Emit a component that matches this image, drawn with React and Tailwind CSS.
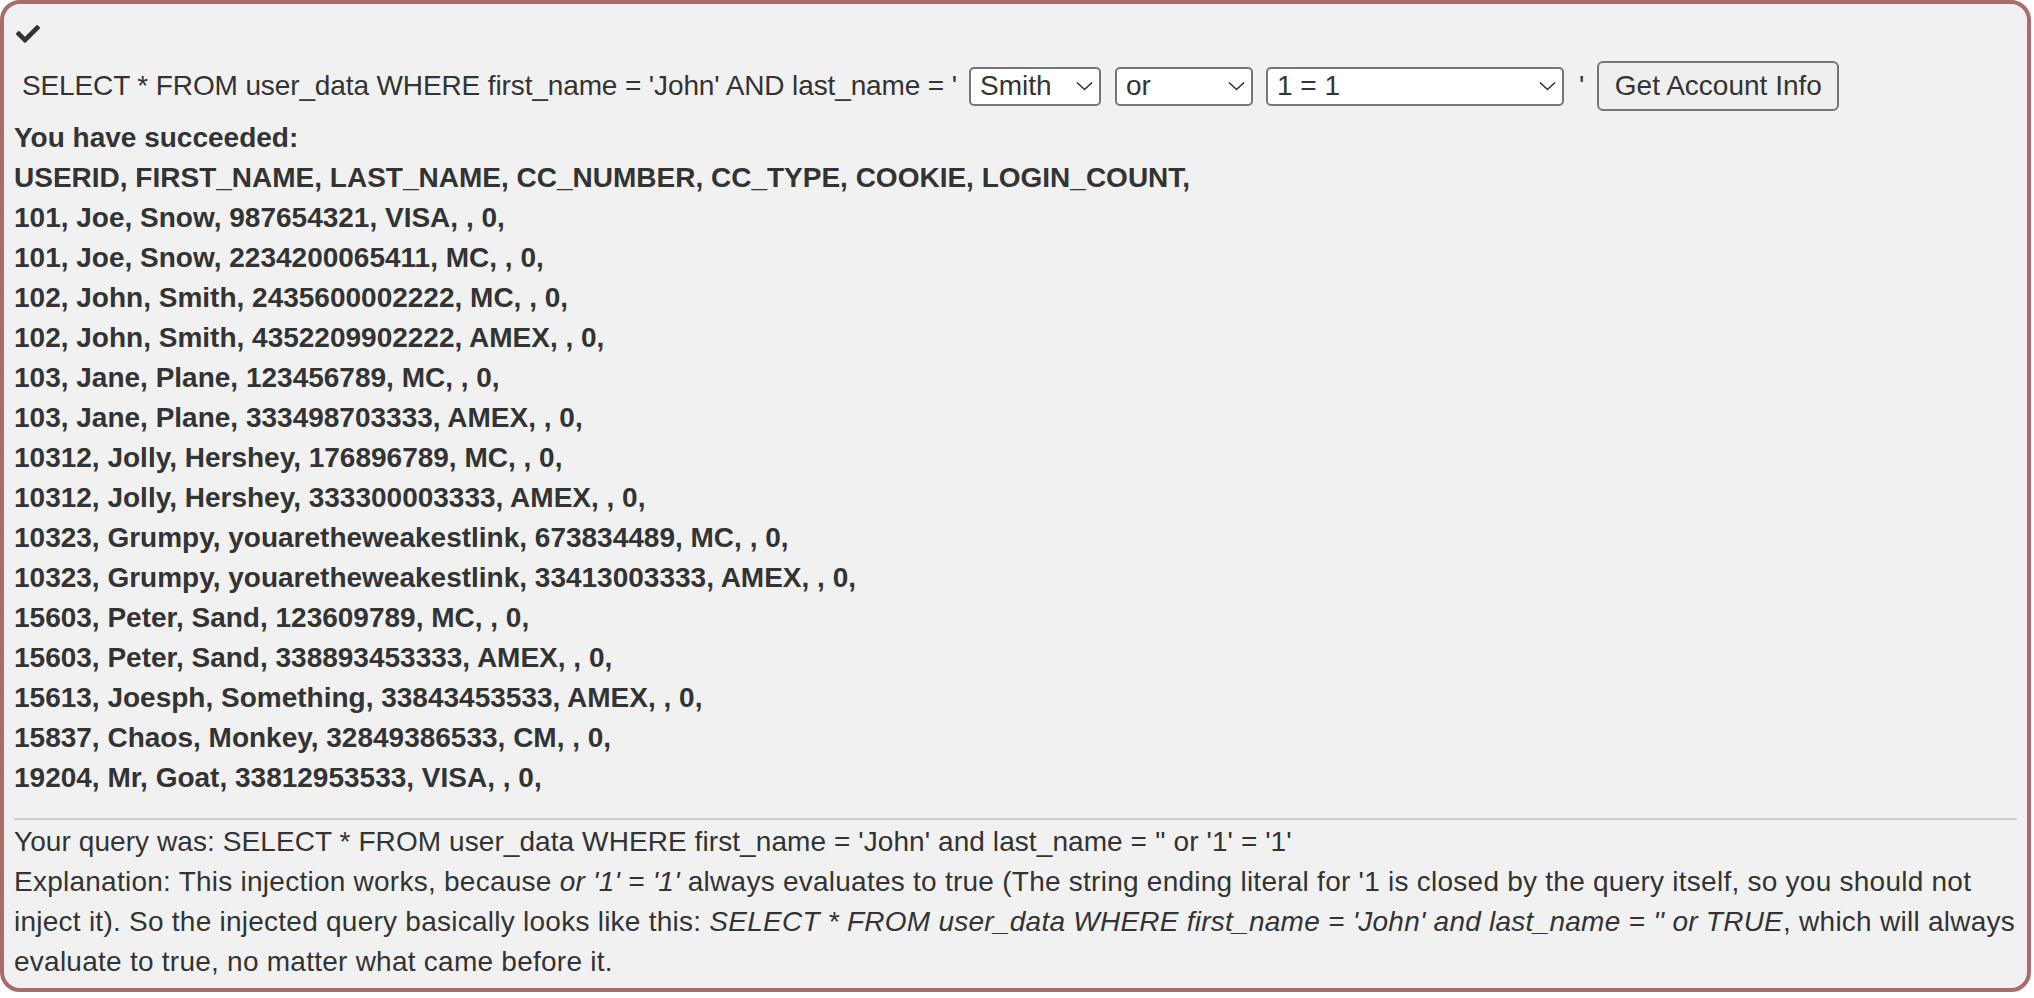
import React, { useState } from "react";

const rows = [
  "USERID, FIRST_NAME, LAST_NAME, CC_NUMBER, CC_TYPE, COOKIE, LOGIN_COUNT,",
  "101, Joe, Snow, 987654321, VISA, , 0,",
  "101, Joe, Snow, 2234200065411, MC, , 0,",
  "102, John, Smith, 2435600002222, MC, , 0,",
  "102, John, Smith, 4352209902222, AMEX, , 0,",
  "103, Jane, Plane, 123456789, MC, , 0,",
  "103, Jane, Plane, 333498703333, AMEX, , 0,",
  "10312, Jolly, Hershey, 176896789, MC, , 0,",
  "10312, Jolly, Hershey, 333300003333, AMEX, , 0,",
  "10323, Grumpy, youaretheweakestlink, 673834489, MC, , 0,",
  "10323, Grumpy, youaretheweakestlink, 33413003333, AMEX, , 0,",
  "15603, Peter, Sand, 123609789, MC, , 0,",
  "15603, Peter, Sand, 338893453333, AMEX, , 0,",
  "15613, Joesph, Something, 33843453533, AMEX, , 0,",
  "15837, Chaos, Monkey, 32849386533, CM, , 0,",
  "19204, Mr, Goat, 33812953533, VISA, , 0,",
];

const Chevron = () => (
  <svg
    className="pointer-events-none absolute right-[8px] top-1/2 -translate-y-1/2"
    width="17"
    height="10"
    viewBox="0 0 17 10"
    fill="none"
  >
    <path d="M1 1.5 L8.5 8.5 L16 1.5" stroke="#333" strokeWidth="1.6" />
  </svg>
);

const Dropdown = ({ value, onChange, options, width }) => (
  <div className={`relative ${width}`}>
    <select
      value={value}
      onChange={(e) => onChange(e.target.value)}
      className="h-[39px] w-full appearance-none rounded-[5px] border-2 border-[#767676] bg-white pl-[9px] pr-[30px] text-[28px] leading-none text-[#333] outline-none"
    >
      {options.map((o) => (
        <option key={o} value={o}>{o}</option>
      ))}
    </select>
    <Chevron />
  </div>
);

const App = () => {
  const [lastName, setLastName] = useState("Smith");
  const [op, setOp] = useState("or");
  const [cond, setCond] = useState("1 = 1");

  return (
    <div className="min-h-[992px] w-[2031px] rounded-[20px] border-4 border-[#a86c6b] bg-[#f1f1f1] px-[10px] pt-[10px] pb-[5px] font-['Liberation_Sans',Arial,sans-serif] text-[28px] leading-[40px] text-[#333]">
      <div className="flex h-[40px] items-center pl-[2px]">
        <svg width="24" height="18" viewBox="0 70 512 372" fill="#333">
          <path d="M173.898 439.404l-166.4-166.4c-9.997-9.997-9.997-26.206 0-36.204l36.203-36.204c9.997-9.998 26.207-9.998 36.204 0L192 312.69 432.095 72.596c9.997-9.997 26.207-9.997 36.204 0l36.203 36.204c9.997 9.997 9.997 26.206 0 36.204l-294.4 294.401c-9.998 9.997-26.207 9.997-36.204-.001z" />
        </svg>
      </div>

      <form
        className="flex h-[64px] items-center pl-[8px]"
        onSubmit={(e) => e.preventDefault()}
      >
        <span className="whitespace-nowrap tracking-[-0.12px]">
          SELECT * FROM user_data WHERE first_name = 'John' AND last_name = '
        </span>
        <div className="ml-[12px]">
          <Dropdown value={lastName} onChange={setLastName} options={["Smith", "'"]} width="w-[132px]" />
        </div>
        <div className="ml-[14px]">
          <Dropdown value={op} onChange={setOp} options={["or", "and"]} width="w-[138px]" />
        </div>
        <div className="ml-[13px]">
          <Dropdown value={cond} onChange={setCond} options={["1 = 1", "1 = 2"]} width="w-[298px]" />
        </div>
        <span className="ml-[15px]">'</span>
        <button
          type="submit"
          className="ml-[13px] h-[50px] w-[242px] rounded-[6px] border-2 border-[#767676] bg-[#efefef] text-[28px] leading-none text-[#333]"
        >
          Get Account Info
        </button>
      </form>

      <div className="font-bold">
        <div>You have succeeded:</div>
        {rows.map((r, i) => (
          <div key={i}>{r}</div>
        ))}
      </div>

      <hr className="mt-[20px] mb-[2px] border-t-2 border-[#cccccc]" />

      <div>
        <div className="tracking-[0.08px]">
          Your query was: SELECT * FROM user_data WHERE first_name = 'John' and last_name = '' or '1' = '1'
        </div>
        <div className="tracking-[0.25px]">
          Explanation: This injection works, because <i>or '1' = '1'</i> always evaluates to true (The string
          ending literal for '1 is closed by the query itself, so you should not inject it). So the injected
          query basically looks like this:{" "}
          <i>SELECT * FROM user_data WHERE first_name = 'John' and last_name = '' or TRUE</i>, which will
          always evaluate to true, no matter what came before it.
        </div>
      </div>
    </div>
  );
};

export default App;
